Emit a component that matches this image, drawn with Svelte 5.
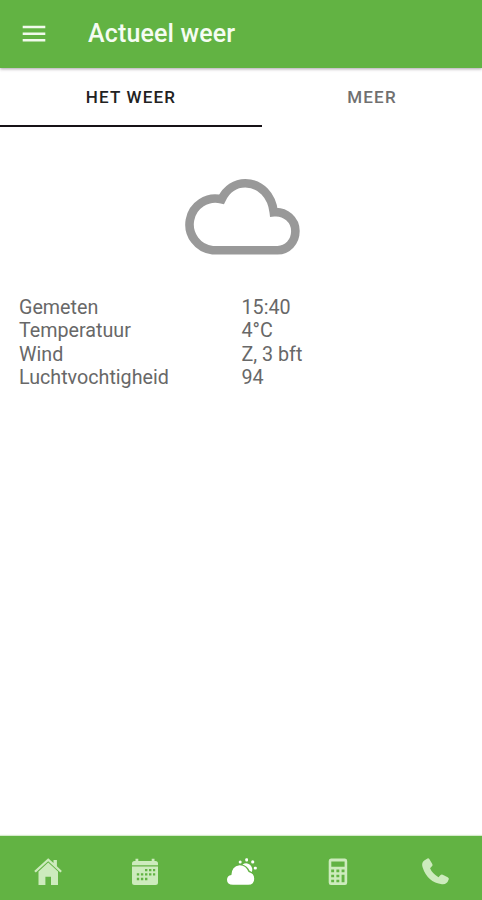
<script>
  const readings = [
    ['Gemeten', '15:40'],
    ['Temperatuur', '4°C'],
    ['Wind', 'Z, 3 bft'],
    ['Luchtvochtigheid', '94'],
  ];
</script>

<div class="app">
  <header>
    <svg class="menu" width="24" height="18" viewBox="0 0 24 18" aria-hidden="true">
      <path d="M.7 2h22.6M.7 8.8h22.6M.7 15.2h22.6" stroke="#f1faec" stroke-width="2.4" />
    </svg>
    <h1>Actueel weer</h1>
  </header>

  <nav class="tabs">
    <button class="tab first active"><span>HET WEER</span></button>
    <button class="tab"><span>MEER</span></button>
  </nav>

  <main>
    <svg class="cloud" width="120" height="80" viewBox="0 0 120 80" aria-hidden="true">
      <path
        d="M29.6 73.2A25.9 25.9 0 1 1 38.6 22.3C43.6 12 52.6 6.3 62.3 6.3C77.8 6.3 88.8 18.5 90.8 35.2C102.6 34 112.4 43 112.4 54C112.4 65 104.5 73.2 94.5 73.2Z"
        fill="none" stroke="#999" stroke-width="8.6" />
    </svg>
    <dl>
      {#each readings as [label, value]}
        <div class="row"><dt>{label}</dt><dd>{value}</dd></div>
      {/each}
    </dl>
  </main>

  <footer>
    <button aria-label="Home">
      <svg width="30" height="30" viewBox="1 0 30 30">
        <path d="M15.2 5.5 25 14.6V28h-7v-8.2h-5.6V28H5.5V14.6Z" />
        <path d="M15.2 1.2 20.5 6V3h3.4v6.2l5 4.8-1.5 1.4L15.2 4.2 2.8 15.4 1.2 14Z" />
      </svg>
    </button>
    <button aria-label="Kalender">
      <svg width="30" height="30" viewBox="0 0 30 30">
        <path d="M2 8.2V6.5Q2 4 4.5 4h1V1.7h2.8V4h13.4V1.7h2.8V4h1Q28 4 28 6.5v1.7Z" />
        <path fill-rule="evenodd" d="M2 9.5h26v16Q28 28 25.5 28h-21Q2 28 2 25.5ZM15 12v2.3h2.4V12Zm4 0v2.3h2.4V12Zm4 0v2.3h2.2V12ZM6.8 16.2v2.4h2.4v-2.4Zm4.1 0v2.4h2.4v-2.4Zm4.1 0v2.4h2.4v-2.4Zm4 0v2.4h2.4v-2.4Zm4 0v2.4h2.2v-2.4ZM6.8 20.8v2.4h2.4v-2.4Zm4.1 0v2.4h2.4v-2.4Zm4.1 0v2.4h2.4v-2.4Z" />
      </svg>
    </button>
    <button class="active" aria-label="Weer">
      <svg width="30" height="30" viewBox="0 0 30 30">
        <path d="M6 27.8Q0 27.8 0 22.7q0-4 4.4-4.7Q4.6 9.4 12.5 8.2q6.4-.2 9.1 6.9Q27.2 16.4 27.2 21.8q0 6-6 6Z" />
        <path d="M15.4 7.6Q19.4 4.8 23 7.8q3.4 3.2 1.8 7.2l-2.2-1.2Q20.3 9 15.4 7.6Z" />
        <circle cx="13.2" cy="4.9" r="1.5" />
        <rect x="18.3" y="1.2" width="2.7" height="3.2" rx="1" />
        <circle cx="25.7" cy="4.9" r="1.6" />
        <rect x="26.8" y="9.8" width="3" height="2.7" rx="1" />
      </svg>
    </button>
    <button aria-label="Rekenmachine">
      <svg width="30" height="30" viewBox="0 0 30 30">
        <path fill-rule="evenodd" d="M8 1.5h14Q24.2 1.5 24.2 4v21.5Q24.2 28 22 28H8Q5.7 28 5.7 25.5V4Q5.7 1.5 8 1.5ZM8.3 4.5v5.2h13.3V4.5ZM8.2 12.6v2.6h2.9v-2.6Zm5.2 0v2.6h2.9v-2.6Zm5.2 0v2.6h2.9v-2.6ZM8.2 17.7v2.6h2.9v-2.6Zm5.2 0v2.6h2.9v-2.6Zm5.2 0v7.6h2.9v-7.6ZM8.2 22.7v2.6h2.9v-2.6Zm5.2 0v2.6h2.9v-2.6Z" />
      </svg>
    </button>
    <button aria-label="Bellen">
      <svg width="30" height="30" viewBox="-1.5 0 30 30">
        <path d="M4.1 3.2 7 1.4q1.1-.5 1.8.7l3 4.9q.8 1.3-.4 2.3l-1.8 1.9q1.8 4.8 8.4 9l1.8-2q1.1-1.1 2.4-.5l5 2.5q1.6.9 1 2.4-1.8 5.3-6.7 4.7Q6.8 25.2 2 10 .7 5.5 4.1 3.2Z" />
      </svg>
    </button>
  </footer>
</div>

<style>
  :global(body) { margin: 0; }
  .app {
    width: 482px;
    height: 900px;
    display: flex;
    flex-direction: column;
    background: #fff;
    font-family: Roboto, "Liberation Sans", sans-serif;
  }
  header {
    height: 68px;
    flex: none;
    box-sizing: border-box;
    display: flex;
    align-items: center;
    padding: 0 0 1px 22px;
    background: #62b343;
    box-shadow: 0 1px 3px rgba(50, 30, 50, 0.42);
    z-index: 1;
  }
  .menu { flex: none; }
  h1 {
    margin: 0 0 0 42px;
    font-size: 25px;
    line-height: 30px;
    font-weight: 500;
    letter-spacing: 0.15px;
    color: #f5fcf2;
  }
  button { border: 0; padding: 0; background: none; font-family: inherit; }
  .tabs { height: 59px; flex: none; display: flex; }
  .tab {
    flex: 1;
    box-sizing: border-box;
    border-bottom: 2px solid transparent;
    font-size: 17px;
    font-weight: 500;
    letter-spacing: 1.2px;
    color: #707070;
  }
  .tab.first { flex: 0 0 262px; }
  .tab.active { color: #222; border-color: #171217; }
  main { flex: 1; }
  .cloud { display: block; margin: 50px 0 0 183px; }
  dl { margin: 38.5px 0 0 19px; }
  .row { display: flex; height: 23.5px; line-height: 23.5px; font-size: 19.7px; color: #686868; }
  dt { width: 222.5px; }
  dd { margin: 0; }
  footer {
    height: 64px;
    flex: none;
    box-sizing: border-box;
    display: flex;
    padding: 8px 0 0 1px;
    background: #62b343;
    box-shadow: 0 -1px 1px #d5ebcb;
  }
  footer button {
    flex: 1;
    display: flex;
    align-items: center;
    justify-content: center;
    color: #cdebbd;
  }
  footer button.active { color: #fff; }
  footer svg { fill: currentColor; overflow: visible; }
</style>
